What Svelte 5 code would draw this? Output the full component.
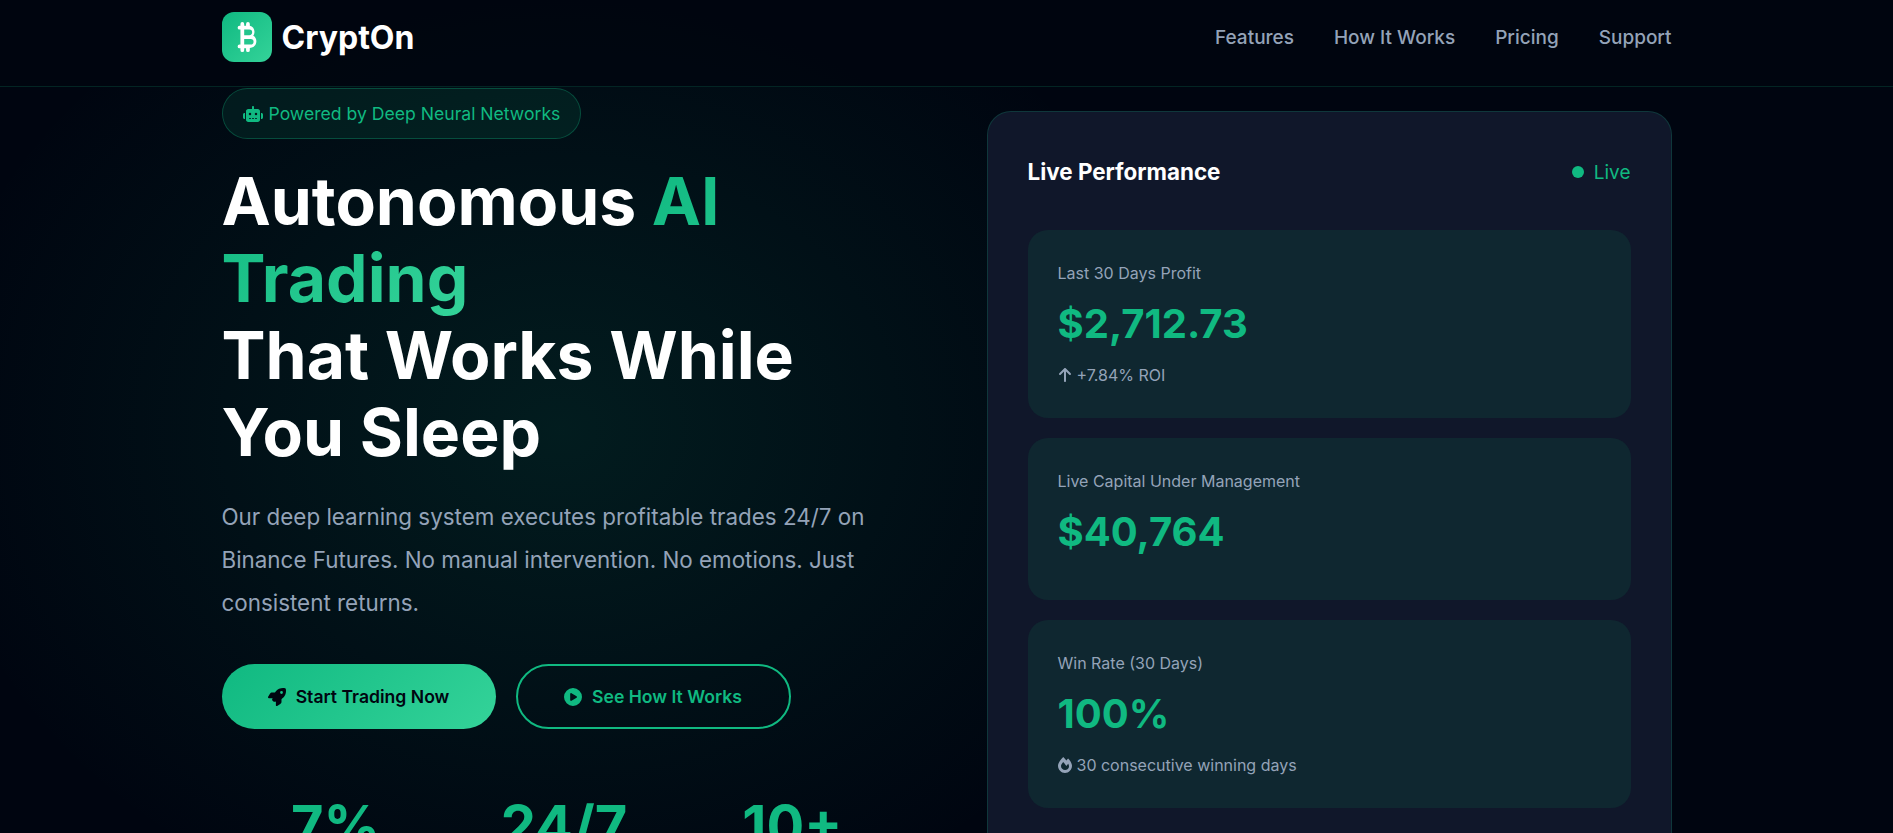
<script>
  const navLinks = ['Features', 'How It Works', 'Pricing', 'Support'];
  const stats = [
    { value: '7%', label: 'Monthly ROI' },
    { value: '24/7', label: 'Trading' },
    { value: '10+', label: 'Pairs' }
  ];
</script>

<div class="page">
  <nav class="nav">
    <div class="nav-inner">
      <div class="logo">
        <span class="logo-icon">
          <svg viewBox="0 0 320 512" width="20" height="30" fill="#fff"><path fill-rule="evenodd" d="M80 0a32 32 0 0 1 32 32v32h32V32a32 32 0 0 1 64 0v33c48 10 80 52 80 103 0 26-8 50-22 68 36 18 54 55 54 92 0 61-45 112-112 116v36a32 32 0 0 1-64 0v-32h-32v32a32 32 0 0 1-64 0v-32H32a32 32 0 0 1 0-64h16V128H32a32 32 0 0 1 0-64h16V32A32 32 0 0 1 80 0zM112 128v96h88a48 48 0 0 0 0-96zM112 288v96h112a48 48 0 0 0 0-96z"/></svg>
        </span>
        <span class="logo-text">CryptOn</span>
      </div>
      <ul class="nav-links">
        {#each navLinks as link}
          <li>{link}</li>
        {/each}
      </ul>
    </div>
  </nav>

  <main class="hero">
    <section class="hero-left">
      <div class="badge">
        <svg viewBox="0 0 640 512" width="20" height="16" fill="currentColor"><path d="M320 0c17.7 0 32 14.3 32 32V96H472c39.8 0 72 32.2 72 72V440c0 39.8-32.2 72-72 72H168c-39.8 0-72-32.2-72-72V168c0-39.8 32.2-72 72-72H288V32c0-17.7 14.3-32 32-32zM208 384c-8.8 0-16 7.2-16 16s7.2 16 16 16h32c8.8 0 16-7.2 16-16s-7.2-16-16-16H208zm96 0c-8.8 0-16 7.2-16 16s7.2 16 16 16h32c8.8 0 16-7.2 16-16s-7.2-16-16-16H304zm96 0c-8.8 0-16 7.2-16 16s7.2 16 16 16h32c8.8 0 16-7.2 16-16s-7.2-16-16-16H400zM264 256a40 40 0 1 0 -80 0 40 40 0 1 0 80 0zm152 40a40 40 0 1 0 0-80 40 40 0 1 0 0 80zM48 224H64V416H48c-26.5 0-48-21.5-48-48V272c0-26.5 21.5-48 48-48zm544 0c26.5 0 48 21.5 48 48v96c0 26.5-21.5 48-48 48H576V224h16z"/></svg>
        Powered by Deep Neural Networks
      </div>
      <h1>Autonomous <span class="accent">AI<br />Trading</span><br />That Works While<br />You Sleep</h1>
      <p class="lead">Our deep learning system executes profitable trades 24/7 on Binance Futures. No manual intervention. No emotions. Just consistent returns.</p>
      <div class="actions">
        <button class="btn primary">
          <svg viewBox="0 0 512 512" width="18" height="18" fill="currentColor"><path d="M156.6 384.9L125.7 354c-8.5-8.5-11.5-20.8-7.7-32.2c3-8.9 7-20.5 11.8-33.8L24 288c-8.6 0-16.6-4.6-20.9-12.1s-4.2-16.7 .2-24.1l52.5-88.5c13-21.9 36.5-35.3 61.9-35.3l82.3 0c2.4-4 4.8-7.7 7.2-11.3C289.1-4.1 411.1-8.1 483.9 5.3c11.6 2.1 20.6 11.2 22.8 22.8c13.4 72.9 9.3 194.8-111.4 276.7c-3.5 2.4-7.3 4.8-11.3 7.2v82.3c0 25.4-13.4 49-35.3 61.9l-88.5 52.5c-7.4 4.4-16.6 4.5-24.1 .2s-12.1-12.2-12.1-20.9V380.8c-14.1 4.9-26.4 8.9-35.7 11.9c-11.2 3.6-23.4 .5-31.8-7.8zM384 168a40 40 0 1 0 0-80 40 40 0 1 0 0 80z"/></svg>
          Start Trading Now
        </button>
        <button class="btn outline">
          <svg viewBox="0 0 512 512" width="18" height="18" fill="currentColor"><path d="M0 256a256 256 0 1 1 512 0A256 256 0 1 1 0 256zM188.3 147.1c-7.6 4.2-12.3 12.3-12.3 20.9V344c0 8.7 4.7 16.7 12.3 20.9s16.8 4.1 24.3-.5l144-88c7.1-4.4 11.5-12.1 11.5-20.5s-4.4-16.1-11.5-20.5l-144-88c-7.4-4.5-16.7-4.7-24.3-.5z"/></svg>
          See How It Works
        </button>
      </div>
      <div class="stats">
        {#each stats as stat}
          <div class="stat">
            <div class="stat-value">{stat.value}</div>
            <div class="stat-label">{stat.label}</div>
          </div>
        {/each}
      </div>
    </section>

    <aside class="panel">
      <div class="panel-head">
        <h2>Live Performance</h2>
        <span class="live"><i class="dot"></i>Live</span>
      </div>

      <div class="metric">
        <div class="metric-label">Last 30 Days Profit</div>
        <div class="metric-value">$2,712.73</div>
        <div class="metric-sub">
          <svg viewBox="0 0 384 512" width="14" height="16" fill="currentColor"><path d="M214.6 41.4c-12.5-12.5-32.8-12.5-45.3 0l-160 160c-12.5 12.5-12.5 32.8 0 45.3s32.8 12.5 45.3 0L160 141.2V448c0 17.7 14.3 32 32 32s32-14.3 32-32V141.2L329.4 246.6c12.5 12.5 32.8 12.5 45.3 0s12.5-32.8 0-45.3l-160-160z"/></svg>
          +7.84% ROI
        </div>
      </div>

      <div class="metric">
        <div class="metric-label">Live Capital Under Management</div>
        <div class="metric-value">$40,764</div>
      </div>

      <div class="metric">
        <div class="metric-label">Win Rate (30 Days)</div>
        <div class="metric-value">100%</div>
        <div class="metric-sub">
          <svg viewBox="0 0 448 512" width="14" height="16" fill="currentColor"><path d="M323.56 51.2c-20.8 19.3-39.58 39.59-56.22 59.97C240.08 73.62 206.28 35.53 168 0 69.74 91.17 0 209.96 0 281.6 0 408.85 100.29 512 224 512s224-103.15 224-230.4c0-53.27-51.98-163.14-124.44-230.4zm-19.47 340.65C282.43 407.01 255.72 416 226.86 416 154.71 416 96 368.26 96 290.75c0-38.61 24.31-72.63 72.79-130.75 6.93 7.98 98.83 125.34 98.83 125.34l58.63-66.88c4.14 6.85 7.91 13.55 11.27 19.97 27.35 52.19 15.81 118.97-33.43 153.42z"/></svg>
          30 consecutive winning days
        </div>
      </div>
    </aside>
  </main>
</div>

<style>
  :global(body) {
    margin: 0;
    overflow: hidden;
    background: #000510;
  }

  .page {
    height: 100vh;
    overflow: hidden;
    font-family: Inter, 'Noto Sans', sans-serif;
    color: #fff;
    background:
      radial-gradient(ellipse 640px 520px at 560px 430px, rgba(16, 185, 129, 0.13), transparent 100%),
      #000510;
  }

  .nav {
    height: 86px;
    border-bottom: 1px solid rgba(16, 185, 129, 0.18);
    background: rgba(0, 5, 16, 0.9);
  }

  .nav-inner {
    width: 1450px;
    height: 100%;
    margin: 0 auto;
    display: flex;
    align-items: center;
    justify-content: space-between;
    padding-bottom: 12px;
    box-sizing: border-box;
  }

  .logo {
    display: flex;
    align-items: center;
    gap: 10px;
  }

  .logo-icon {
    width: 50px;
    height: 50px;
    border-radius: 12px;
    background: linear-gradient(135deg, #10b981, #34d399);
    display: flex;
    align-items: center;
    justify-content: center;
  }

  .logo-text {
    font-size: 32px;
    font-weight: 700;
  }

  .nav-links {
    display: flex;
    gap: 40px;
    list-style: none;
    margin: 0;
    padding: 0;
    font-size: 19px;
    font-weight: 500;
    color: #94a3b8;
  }

  .hero {
    width: 1450px;
    margin: 0 auto;
    display: grid;
    grid-template-columns: 1fr 1fr;
    gap: 80px;
    align-items: start;
  }

  .hero-left {
    padding-top: 1px;
  }

  .badge {
    display: inline-flex;
    align-items: center;
    gap: 6px;
    box-sizing: border-box;
    height: 51px;
    padding: 0 20px;
    border: 1px solid rgba(16, 185, 129, 0.3);
    border-radius: 50px;
    background: rgba(16, 185, 129, 0.1);
    color: #10b981;
    font-size: 17.6px;
  }

  h1 {
    margin: 24px 0 24px;
    font-size: 66px;
    line-height: 77px;
    font-weight: 700;
  }

  .accent {
    background: linear-gradient(135deg, #10b981, #34d399);
    -webkit-background-clip: text;
    background-clip: text;
    color: transparent;
  }

  .lead {
    margin: 0 0 40px;
    font-size: 22.4px;
    line-height: 43px;
    color: #94a3b8;
  }

  .actions {
    display: flex;
    gap: 20px;
  }

  .btn {
    display: flex;
    align-items: center;
    justify-content: center;
    gap: 10px;
    width: 274px;
    height: 65px;
    box-sizing: border-box;
    border-radius: 50px;
    font-family: inherit;
    font-size: 17.6px;
    font-weight: 600;
  }

  .primary {
    border: none;
    background: linear-gradient(135deg, #10b981, #34d399);
    color: #000510;
  }

  .outline {
    border: 2px solid #10b981;
    background: transparent;
    color: #10b981;
    width: 275px;
  }

  .stats {
    display: grid;
    grid-template-columns: repeat(3, 1fr);
    margin-top: 64px;
    text-align: center;
  }

  .stat-value {
    font-size: 56px;
    font-weight: 700;
    line-height: 1.2;
    color: #10b981;
  }

  .stat-label {
    font-size: 16px;
    color: #94a3b8;
  }

  .panel {
    margin-top: 24px;
    padding: 40px;
    box-sizing: border-box;
    border: 1px solid rgba(16, 185, 129, 0.2);
    border-radius: 24px;
    background: #10172a;
  }

  .panel-head {
    display: flex;
    justify-content: space-between;
    align-items: center;
    margin-bottom: 38px;
  }

  h2 {
    margin: 0;
    font-size: 22.4px;
    line-height: 40px;
    font-weight: 700;
  }

  .live {
    display: flex;
    align-items: center;
    gap: 10px;
    color: #10b981;
    font-size: 19px;
  }

  .dot {
    width: 12px;
    height: 12px;
    border-radius: 50%;
    background: #10b981;
  }

  .metric {
    padding: 30px;
    margin-bottom: 20px;
    border-radius: 20px;
    background: #0f2730;
  }

  .metric-label {
    font-size: 16px;
    line-height: 26px;
    color: #94a3b8;
  }

  .metric-value {
    margin: 12px 0;
    font-size: 40px;
    line-height: 52px;
    font-weight: 700;
    color: #10b981;
  }

  .metric-sub {
    display: flex;
    align-items: center;
    gap: 5px;
    font-size: 16px;
    line-height: 26px;
    color: #94a3b8;
  }
</style>
